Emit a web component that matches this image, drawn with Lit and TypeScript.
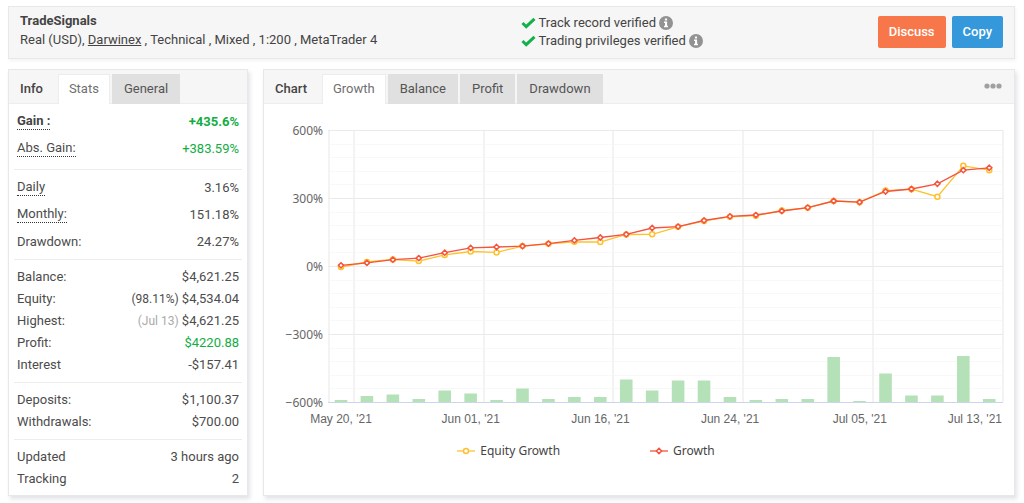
import { LitElement, html, svg, css, nothing } from "lit";
import { customElement, property, state } from "lit/decorators.js";
import { classMap } from "lit/directives/class-map.js";

interface Row {
  label: string;
  value: string;
  note?: string;
  faint?: boolean;
  hint?: boolean;
  strong?: boolean;
  gain?: boolean;
}

const GROUPS: { roomy: boolean; rows: Row[] }[] = [
  {
    roomy: true,
    rows: [
      { label: "Gain :", value: "+435.6%", hint: true, strong: true, gain: true },
      { label: "Abs. Gain:", value: "+383.59%", hint: true, gain: true },
    ],
  },
  {
    roomy: true,
    rows: [
      { label: "Daily", value: "3.16%", hint: true },
      { label: "Monthly:", value: "151.18%", hint: true },
      { label: "Drawdown:", value: "24.27%" },
    ],
  },
  {
    roomy: false,
    rows: [
      { label: "Balance:", value: "$4,621.25" },
      { label: "Equity:", value: "$4,534.04", note: "(98.11%)" },
      { label: "Highest:", value: "$4,621.25", note: "(Jul 13)", faint: true },
      { label: "Profit:", value: "$4220.88", gain: true },
      { label: "Interest", value: "-$157.41" },
    ],
  },
  {
    roomy: false,
    rows: [
      { label: "Deposits:", value: "$1,100.37" },
      { label: "Withdrawals:", value: "$700.00" },
    ],
  },
  {
    roomy: false,
    rows: [
      { label: "Updated", value: "3 hours ago" },
      { label: "Tracking", value: "2" },
    ],
  },
];

const GROWTH = [5, 16, 30, 37, 61, 82, 86, 90, 101, 115, 128, 142, 170, 176, 203, 221, 227, 245, 260, 289, 284, 331, 342, 365, 425, 435.6];
const EQUITY = [-2, 20, 31, 24, 51, 66, 62, 90, 100, 109, 108, 141, 142, 175, 201, 219, 224, 247, 259, 289, 284, 335, 341, 308, 444, 425];
const VOLUME = [2, 6, 7.5, 3, 11.5, 8.5, 2, 13.5, 3, 5, 5, 22.5, 11.5, 21.5, 21.5, 5, 2, 3, 3, 45, 1, 28.5, 6.5, 6.5, 46, 3];
const DATES = ["May 20, '21", "Jun 01, '21", "Jun 16, '21", "Jun 24, '21", "Jul 05, '21", "Jul 13, '21"];

@customElement("tab-bar")
class TabBar extends LitElement {
  @property() heading = "";
  @property({ attribute: false }) tabs: string[] = [];
  @state() private active = 0;

  static styles = css`
    :host {
      display: flex;
      align-items: flex-end;
      height: 34px;
      box-sizing: border-box;
      background: #f6f6f6;
      border-bottom: 1px solid #ededed;
      font: 13px/20px Roboto, sans-serif;
      color: #555;
    }
    .heading {
      margin: 0;
      padding: 0 15px 4px 11px;
      font-size: 13px;
      line-height: 20px;
      font-weight: 500;
      color: #444;
    }
    .list {
      display: flex;
      gap: 2px;
      margin-bottom: -1px;
    }
    .tab {
      height: 30px;
      padding: 0 12px;
      border: 0;
      font: inherit;
      color: inherit;
      background: #e0e0e0;
    }
    .tab.active {
      padding: 0 10px 1px;
      border: 1px solid #ededed;
      border-bottom: 0;
      color: #707070;
      background: #fff;
    }
    .extra {
      margin-left: auto;
    }
  `;

  render() {
    return html`
      <h2 class="heading">${this.heading}</h2>
      <div class="list" role="tablist" aria-label=${this.heading}>
        ${this.tabs.map(
          (tab, i) => html`<button
            class=${classMap({ tab: true, active: i === this.active })}
            role="tab"
            aria-selected=${i === this.active ? "true" : "false"}
            @click=${() => (this.active = i)}
          >${tab}</button>`
        )}
      </div>
      <div class="extra"><slot></slot></div>
    `;
  }
}

@customElement("growth-chart")
class GrowthChart extends LitElement {
  static styles = css`
    :host {
      display: block;
    }
    .plot {
      display: block;
      width: 100%;
      height: auto;
    }
    .minor {
      stroke: #f8f8f8;
    }
    .major {
      stroke: #eaeaea;
    }
    .column {
      stroke: #f3f3f3;
      stroke-width: 2;
    }
    .axis {
      stroke: #ccd6eb;
    }
    .bar {
      fill: #b5e1b9;
    }
    .percent {
      font: 12px "Noto Sans", sans-serif;
      fill: #666;
      text-anchor: end;
    }
    .date {
      font: 12px "Liberation Sans", sans-serif;
      fill: #666;
      text-anchor: middle;
    }
    .date.last {
      text-anchor: end;
    }
    .line {
      fill: none;
      stroke-width: 1.3;
    }
    .equity {
      stroke: #fdc12c;
    }
    .growth {
      stroke: #f4543f;
    }
    .mark {
      fill: #fff;
      stroke-width: 1.5;
    }
    .legend {
      display: flex;
      justify-content: center;
      gap: 90px;
      margin: 0;
      padding: 9px 106px 0 0;
      list-style: none;
      font: 12px/20px "Noto Sans", sans-serif;
      color: #444;
    }
    .entry {
      display: flex;
      align-items: center;
      gap: 5px;
    }
  `;

  private x(i: number) {
    return 77 + i * 25.93;
  }

  private y(value: number) {
    return 162.5 - (value / 300) * 68;
  }

  private path(values: number[]) {
    return values.map((v, i) => `${this.x(i).toFixed(1)},${this.y(v).toFixed(1)}`).join(" ");
  }

  private diamond(x: number, y: number) {
    return `M${x} ${y - 2.6}L${x + 2.6} ${y}L${x} ${y + 2.6}L${x - 2.6} ${y}Z`;
  }

  render() {
    return html`
      <svg class="plot" viewBox="0 0 750 328" role="img" aria-label="Growth and equity growth in percent">
        ${Array.from({ length: 20 }, (_, i) => svg`<line class="minor" x1="64" x2="739" y1=${Math.round(26 + i * 13.6) + 0.5} y2=${Math.round(26 + i * 13.6) + 0.5} />`)}
        ${[65, 90, 220, 349, 479, 609, 739].map((x) => svg`<line class="column" x1=${x} x2=${x} y1="26" y2="298" />`)}
        ${[600, 300, 0, -300, -600].map(
          (v) => svg`
            <line class=${v === -600 ? "axis" : "major"} x1="64" x2="739" y1=${this.y(v)} y2=${this.y(v)} />
            <text class="percent" x="59" y=${this.y(v) + 4}>${String(v).replace("-", "−")}%</text>`
        )}
        ${VOLUME.map((h, i) => svg`<rect class="bar" x=${this.x(i) - 6.3} y=${298 - h} width="12.6" height=${h} />`)}
        <polyline class="line equity" points=${this.path(EQUITY)} />
        ${EQUITY.map((v, i) => svg`<circle class="mark equity" cx=${this.x(i)} cy=${this.y(v)} r="2.5" />`)}
        <polyline class="line growth" points=${this.path(GROWTH)} />
        ${GROWTH.map((v, i) => svg`<path class="mark growth" d=${this.diamond(this.x(i), this.y(v))} />`)}
        ${DATES.map(
          (d, i) => svg`<text class=${classMap({ date: true, last: i === 5 })} x=${i === 5 ? 738 : 77 + i * 129.7} y="319">${d}</text>`
        )}
      </svg>
      <ul class="legend">
        <li class="entry">
          <svg width="18" height="10" aria-hidden="true">
            <path class="line equity" d="M0 5H18" />
            <circle class="mark equity" cx="9" cy="5" r="2.5" />
          </svg>
          Equity Growth
        </li>
        <li class="entry">
          <svg width="18" height="10" aria-hidden="true">
            <path class="line growth" d="M0 5H18" />
            <path class="mark growth" d=${this.diamond(9, 5)} />
          </svg>
          Growth
        </li>
      </ul>
    `;
  }
}

@customElement("app-root")
class AppRoot extends LitElement {
  static styles = css`
    :host {
      display: grid;
      grid-template-columns: 240px minmax(0, 1fr);
      gap: 10px 15px;
      padding: 6px 9px 7px 8px;
      background: #fff;
      font: 13px/20px Roboto, sans-serif;
      color: #4c4c4c;
    }
    .card {
      border: 1px solid #e8e8ea;
      background: #fff;
      box-shadow: 2px 3px 4px rgba(60, 50, 90, 0.14);
    }
    .top {
      grid-column: 1 / -1;
      display: grid;
      grid-template-columns: 1fr 1fr;
      align-items: center;
      padding: 4px 11px 5px;
      background: #f6f6f6;
      box-shadow: 1px 2px 3px rgba(60, 50, 90, 0.06);
      color: #444;
      line-height: 18px;
    }
    .account {
      padding-bottom: 4px;
    }
    .name {
      margin: 0;
      font-size: 13px;
      line-height: 20px;
      font-weight: 700;
    }
    .meta {
      margin: 0;
    }
    .broker {
      color: inherit;
    }
    .right {
      display: flex;
      justify-content: space-between;
      align-items: center;
      padding-left: 9px;
    }
    .checks {
      margin: 0;
      padding: 0;
      list-style: none;
    }
    .check {
      display: flex;
      align-items: center;
      gap: 3px;
    }
    .actions {
      display: flex;
      gap: 6px;
    }
    .action {
      height: 32px;
      padding: 0 11px;
      border: 0;
      border-radius: 2px;
      font: 500 13px/20px Roboto, sans-serif;
      color: #fff;
      background: #3498db;
    }
    .action.discuss {
      background: #f7774a;
    }
    .stats {
      padding: 0 5px;
    }
    .group {
      margin: 0;
      padding: 6px 3px;
      line-height: 22px;
    }
    .group.roomy {
      padding: 4px 3px;
      line-height: 27px;
    }
    .group.roomy:first-child {
      padding-bottom: 7px;
    }
    .group:last-child {
      padding-bottom: 5px;
    }
    .group + .group {
      border-top: 1px solid #ededed;
    }
    .row {
      display: flex;
      justify-content: space-between;
      align-items: center;
    }
    .value {
      margin: 0;
    }
    .hint {
      line-height: 16px;
      border-bottom: 1px dotted #333;
    }
    .strong {
      font-weight: 700;
      color: #444;
    }
    .gain {
      color: #12ad43;
    }
    .note {
      font-size: 12px;
      line-height: 12px;
    }
    .faint {
      color: #aaa;
    }
    .more {
      display: block;
      padding: 0 12px 12px;
      border: 0;
      background: none;
    }
    .icon {
      display: block;
    }
  `;

  private check(text: string) {
    return html`<li class="check">
      <svg class="icon" width="15" height="12" viewBox="0 0 15 12" aria-hidden="true">
        <path d="M1.5 6L5.2 9.7L13.5 1.8" fill="none" stroke="#14b04c" stroke-width="3" />
      </svg>
      <span>${text}</span>
      <svg class="icon" width="14" height="14" viewBox="0 0 14 14" role="img" aria-label="More information">
        <circle cx="7" cy="7" r="7" fill="#929292" />
        <path d="M5.9 2.5h2.2v2H5.9zM5 5.5h3.1v4.2H9v1.5H5V9.7h1V7H5z" fill="#fff" />
      </svg>
    </li>`;
  }

  private row(r: Row) {
    return html`<div class="row">
      <dt class=${classMap({ hint: !!r.hint, strong: !!r.strong })}>${r.label}</dt>
      <dd class=${classMap({ value: true, strong: !!r.strong, gain: !!r.gain })}>
        ${r.note ? html`<span class=${classMap({ note: true, faint: !!r.faint })}>${r.note}</span>` : nothing}
        ${r.value}
      </dd>
    </div>`;
  }

  render() {
    return html`
      <header class="card top">
        <div class="account">
          <h1 class="name">TradeSignals</h1>
          <p class="meta">Real (USD), <a class="broker" href="#darwinex">Darwinex</a> , Technical , Mixed , 1:200 , MetaTrader 4</p>
        </div>
        <div class="right">
          <ul class="checks">
            ${this.check("Track record verified")} ${this.check("Trading privileges verified")}
          </ul>
          <div class="actions">
            <button class="action discuss">Discuss</button>
            <button class="action">Copy</button>
          </div>
        </div>
      </header>
      <section class="card">
        <tab-bar heading="Info" .tabs=${["Stats", "General"]}></tab-bar>
        <div class="stats">
          ${GROUPS.map((g) => html`<dl class=${classMap({ group: true, roomy: g.roomy })}>${g.rows.map((r) => this.row(r))}</dl>`)}
        </div>
      </section>
      <section class="card">
        <tab-bar heading="Chart" .tabs=${["Growth", "Balance", "Profit", "Drawdown"]}>
          <button class="more" aria-label="Chart options">
            <svg class="icon" width="18" height="10" viewBox="0 0 18 10" fill="#a0a0a0">
              <circle cx="3" cy="5" r="2.6" />
              <circle cx="9" cy="5" r="2.6" />
              <circle cx="15" cy="5" r="2.6" />
            </svg>
          </button>
        </tab-bar>
        <growth-chart></growth-chart>
      </section>
    `;
  }
}
